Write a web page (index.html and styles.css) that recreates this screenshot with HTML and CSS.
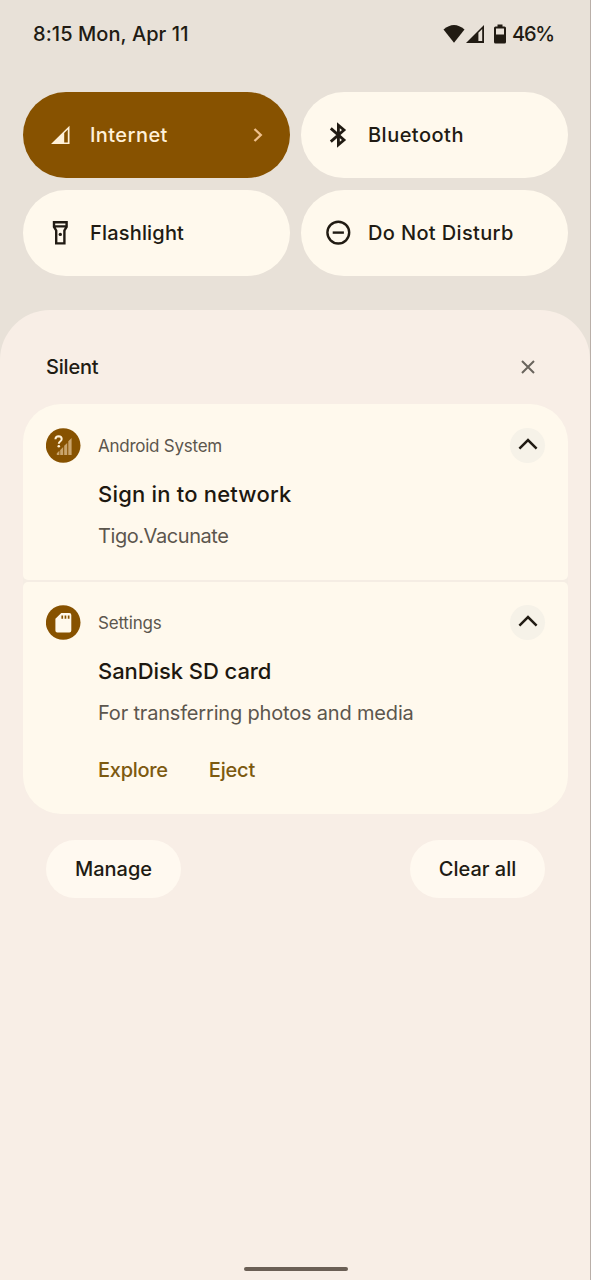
FILE: index.html
```html
<!DOCTYPE html>
<html lang="en">
<head>
<meta charset="utf-8">
<title>Notification shade</title>
<link rel="stylesheet" href="styles.css">
</head>
<body>
<div class="screen">
  <header class="status">
    <span class="clock">8:15 Mon, Apr 11</span>
    <div class="status-icons">
      <svg class="wifi" width="22" height="18" viewBox="0 0 22 18"><path d="M0.5 4.6Q11-4.4 21.5 4.6L11 17.8Z"/></svg>
      <svg class="signal" width="18" height="18" viewBox="0 0 18 18"><path fill-rule="evenodd" d="M0 18L18 0V18ZM12.4 7.8V16H16.2V4Z"/></svg>
      <svg class="battery" width="12" height="20" viewBox="0 0 12 20"><path fill-rule="evenodd" d="M3.5 0.5h5v2h2Q12 2.5 12 4V18Q12 19.5 10.5 19.5H1.5Q0 19.5 0 18V4Q0 2.5 1.5 2.5H3.5ZM2 4.5V10.5H10V4.5Z"/></svg>
      <span class="percent">46%</span>
    </div>
  </header>

  <section class="tiles">
    <div class="tile tile-active">
      <svg class="tile-icon" width="28" height="28" viewBox="0 0 28 28"><path fill="currentColor" fill-rule="evenodd" d="M5 23L23.5 4.8V23ZM18.2 12V21.5H21.8V8.6Z"/></svg>
      <span class="tile-label t-internet">Internet</span>
      <svg class="chevron" width="10" height="16" viewBox="0 0 10 16"><path d="M1.5 2L7.8 8L1.5 14"/></svg>
    </div>
    <div class="tile">
      <svg class="tile-icon" width="28" height="28" viewBox="0 0 28 28"><path class="line bold" d="M6.8 7.4L20 19L14.4 23.8V4.2L20 9L6.8 20.6"/></svg>
      <span class="tile-label t-bluetooth">Bluetooth</span>
    </div>
    <div class="tile">
      <svg class="tile-icon" width="28" height="28" viewBox="0 0 28 28"><path class="line" d="M8 3.2H20.6V7.8L18.4 11.5V24.4H10.2V11.5L8 7.8ZM8 7.4H20.6"/><circle cx="14.3" cy="15.4" r="1.7" fill="currentColor"/></svg>
      <span class="tile-label t-flashlight">Flashlight</span>
    </div>
    <div class="tile">
      <svg class="tile-icon" width="28" height="28" viewBox="0 0 28 28"><circle class="line" cx="14.3" cy="13.6" r="10.9"/><path class="line" d="M8.7 13.6H19.9"/></svg>
      <span class="tile-label t-dnd">Do Not Disturb</span>
    </div>
  </section>

  <main class="shade">
    <div class="section-head">
      <h2 class="section-title">Silent</h2>
      <svg class="close" width="14" height="14" viewBox="0 0 14 14"><path d="M1 1L13 13M13 1L1 13"/></svg>
    </div>

    <div class="cards">
      <article class="card card-first">
        <svg class="app-icon" width="35" height="35" viewBox="0 0 35 35">
          <circle cx="17.2" cy="17.5" r="17.3" fill="#875200"/>
          <path d="M9.4 11.2Q9.6 8.3 12.6 8.3Q15.7 8.4 15.7 11Q15.7 12.5 14.1 13.5Q12.8 14.4 12.8 15.8" fill="none" stroke="#fff1d6" stroke-width="2"/>
          <circle cx="12.8" cy="18.3" r="1.3" fill="#fff1d6"/>
          <path d="M10.8 27V25.3L13.4 22.8V27ZM14.2 27V21.9L17.2 19V27ZM18.2 27V17.8L21.2 15V27ZM22.3 27V13.2L25.6 10V27Z" fill="#caa56d"/>
        </svg>
        <div class="card-body">
          <div class="card-top">
            <span class="app-name a-system">Android System</span>
            <span class="collapse"><svg width="20" height="12" viewBox="0 0 20 12"><path d="M1.4 10.6L10 2L18.6 10.6"/></svg></span>
          </div>
          <h3 class="title n-network">Sign in to network</h3>
          <p class="text n-tigo">Tigo.Vacunate</p>
        </div>
      </article>
      <article class="card card-last">
        <svg class="app-icon" width="35" height="35" viewBox="0 0 35 35">
          <circle cx="17.2" cy="17.5" r="17.3" fill="#875200"/>
          <path fill-rule="evenodd" fill="#fff9ed" d="M15.3 8H23.4Q25.3 8 25.3 9.9V25.6Q25.3 27.5 23.4 27.5H11.3Q9.4 27.5 9.4 25.6V13.8ZM15.4 10.4V13.8H17.1V10.4ZM18.6 10.4V13.8H20.3V10.4ZM21.8 10.4V13.8H23.5V10.4Z"/>
        </svg>
        <div class="card-body">
          <div class="card-top">
            <span class="app-name a-settings">Settings</span>
            <span class="collapse"><svg width="20" height="12" viewBox="0 0 20 12"><path d="M1.4 10.6L10 2L18.6 10.6"/></svg></span>
          </div>
          <h3 class="title n-sd">SanDisk SD card</h3>
          <p class="text n-transfer">For transferring photos and media</p>
          <div class="actions">
            <span class="a-explore">Explore</span>
            <span class="a-eject">Eject</span>
          </div>
        </div>
      </article>
    </div>

    <div class="footer">
      <span class="pill pill-manage">Manage</span>
      <span class="pill pill-clear">Clear all</span>
    </div>

    <div class="nav-handle"></div>
  </main>
</div>
</body>
</html>
```

FILE: styles.css
```css
* { box-sizing: border-box; margin: 0; padding: 0; }

body {
  font-family: Inter, Roboto, "Liberation Sans", sans-serif;
  color: #211b13;
  background: #e8e1d8;
}

svg { display: block; flex: none; }
span, h2, h3, p { white-space: nowrap; }

.screen {
  width: 591px;
  height: 1280px;
  display: flex;
  flex-direction: column;
  border-right: 1px solid #b9afa8;
  overflow: hidden;
}

.status {
  height: 92px;
  padding: 22px 36px 0 33px;
  display: flex;
  justify-content: space-between;
  align-items: flex-start;
  font-size: 20px;
  line-height: 24px;
  font-weight: 450;
}

.clock { letter-spacing: 0.07px; }
.percent { letter-spacing: -1.2px; }
.status-icons { display: flex; align-items: center; fill: #211b13; }
.signal { margin-left: 1px; }
.battery { margin: 0 6px 0 10px; }

.tiles {
  display: grid;
  grid-template-columns: 267px 267px;
  grid-auto-rows: 86px;
  gap: 12px 11px;
  padding-left: 23px;
}

.tile {
  display: flex;
  align-items: center;
  padding: 0 27px 0 23px;
  border-radius: 43px;
  background: #fff9ed;
}

.tile-active { background: #875200; color: #fff1d9; }
.tile-icon { margin-right: 16px; }
.line { fill: none; stroke: currentColor; stroke-width: 2.4; }
.bold { stroke-width: 2.8; }
.tile-label { font-size: 20px; line-height: 24px; font-weight: 450; }
.t-internet { letter-spacing: 0.42px; }
.t-bluetooth { letter-spacing: 0.48px; }
.t-flashlight { letter-spacing: 0.18px; }
.t-dnd { letter-spacing: 0.36px; }
.chevron { margin-left: auto; fill: none; stroke: #efc08c; stroke-width: 2.3; }

.shade {
  flex: 1;
  margin-top: 34px;
  padding: 0 22px 0 23px;
  border-radius: 50px 50px 0 0;
  background: #f8eee6;
  display: flex;
  flex-direction: column;
}

.section-head {
  height: 94px;
  padding: 20px 33px 0 23px;
  display: flex;
  align-items: center;
  justify-content: space-between;
}

.section-title { font-size: 20px; font-weight: 450; line-height: 24px; letter-spacing: -0.2px; }
.close { fill: none; stroke: #6a645d; stroke-width: 2; }

.cards { display: flex; flex-direction: column; gap: 2px; background: #f5ede4; border-radius: 38px; }
.card { display: flex; gap: 17px; padding: 24px 23px 0; background: #fff9ed; }
.card-first { height: 176px; border-radius: 38px 38px 5px 5px; }
.card-last { height: 232px; padding-top: 23px; border-radius: 5px 5px 38px 38px; }
.card-body { flex: 1; }
.card-top { height: 35px; display: flex; align-items: center; justify-content: space-between; }
.app-name { font-size: 17px; line-height: 22px; color: #5c564d; }
.a-system { letter-spacing: -0.25px; }
.a-settings { letter-spacing: -0.2px; }

.collapse {
  width: 35px;
  height: 35px;
  border-radius: 50%;
  background: #f6f2e8;
  display: grid;
  place-items: center;
  padding-bottom: 3px;
}
.collapse path { fill: none; stroke: #211b13; stroke-width: 2.5; }

.title { margin-top: 17px; font-size: 22px; line-height: 28px; font-weight: 450; color: #1d1810; }
.n-network { letter-spacing: 0.2px; }
.n-sd { letter-spacing: -0.07px; }
.text { margin-top: 15px; font-size: 20px; line-height: 26px; color: #5c564d; }
.n-tigo { letter-spacing: -0.43px; }
.n-transfer { letter-spacing: -0.18px; }

.actions {
  display: flex;
  gap: 41px;
  margin-top: 32px;
  font-size: 20px;
  line-height: 24px;
  font-weight: 500;
  color: #7d5a10;
}
.a-explore { letter-spacing: -0.28px; }
.a-eject { letter-spacing: -0.2px; }

.footer { display: flex; justify-content: space-between; padding: 26px 23px 0; }
.pill {
  height: 58px;
  border-radius: 29px;
  background: #fff9f0;
  font-size: 20px;
  font-weight: 450;
  display: flex;
  align-items: center;
  justify-content: center;
}
.pill-manage { width: 135px; }
.pill-clear { width: 135px; }

.nav-handle {
  width: 104px;
  height: 4px;
  margin: auto auto 9px;
  border-radius: 2px;
  background: #6b5f55;
}
```
